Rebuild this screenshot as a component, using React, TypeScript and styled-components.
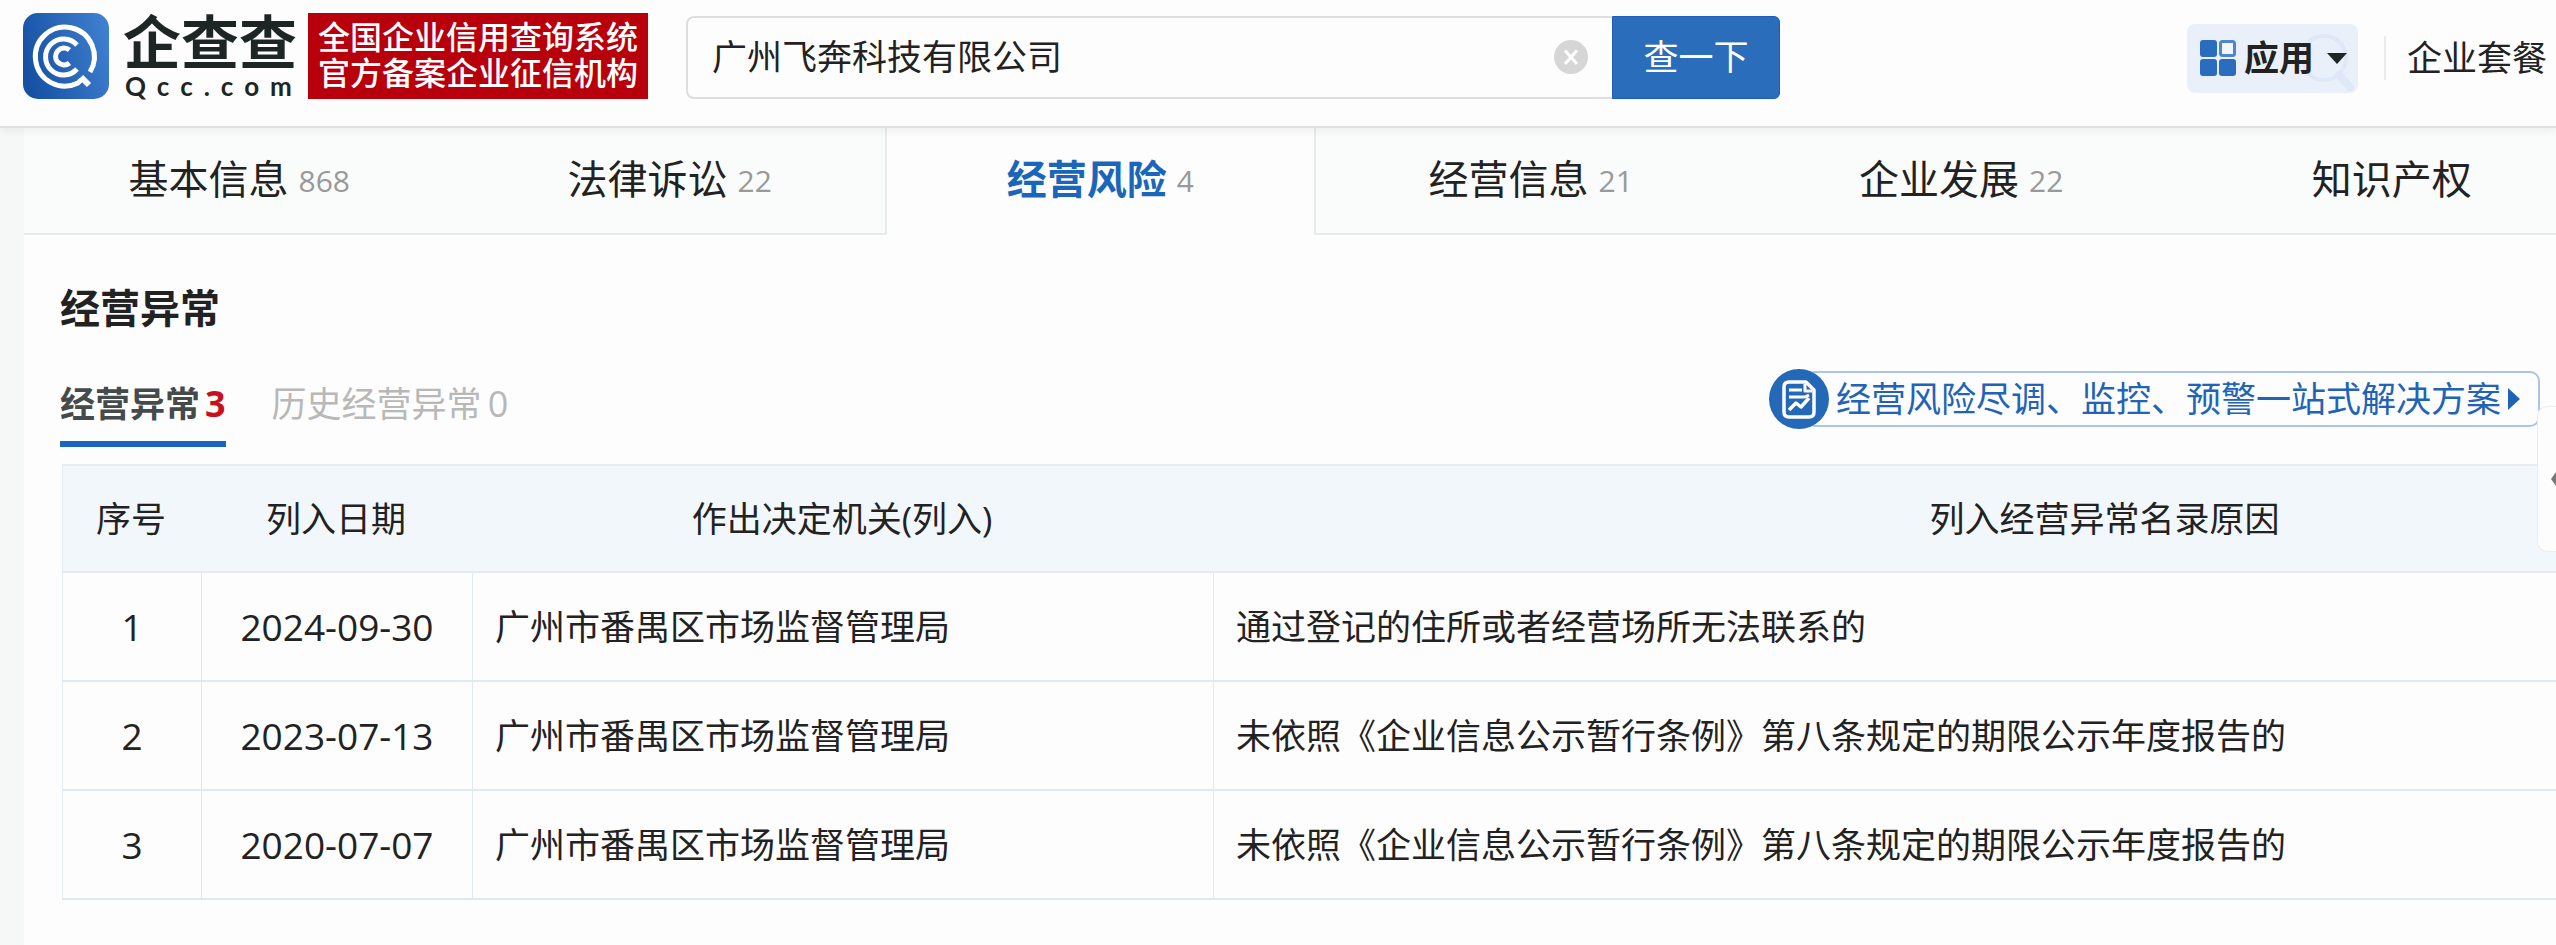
import React from "react";
import styled, { createGlobalStyle } from "styled-components";

const GlobalStyle = createGlobalStyle`
  *, *::before, *::after { box-sizing: border-box; }
  body {
    margin: 0;
    overflow-x: hidden;
    background: #fdfdfd;
    color: #222;
    font-family: "Open Sans", "Noto Sans CJK SC", sans-serif;
    font-size: 35px;
    line-height: 48px;
  }
  button, input { font: inherit; color: inherit; }
  a { color: inherit; text-decoration: none; }
`;

const Page = styled.div`
  position: relative;
  min-height: 100vh;
  display: flex;
  flex-direction: column;
  overflow: hidden;
`;

const Header = styled.header`
  position: relative;
  z-index: 1;
  display: flex;
  align-items: center;
  padding: 13px 9px 27px 23px;
  background: #fdfdfd;
  border-bottom: 2px solid #dfe0e0;
  box-shadow: 0 3px 8px rgba(0, 0, 0, 0.06);
`;

const Brand = styled.a`
  display: flex;
  align-items: center;
  gap: 14px;
`;

const Wordmark = styled.span`
  display: flex;
  flex-direction: column;
  width: 174px;
  color: #1d2624;
`;

const BrandName = styled.span`
  font-family: "Liberation Sans", "Noto Sans CJK SC", sans-serif;
  font-size: 58px;
  line-height: 60px;
  font-weight: 700;
`;

const BrandDomain = styled.span`
  padding-left: 2px;
  font-family: Lato, sans-serif;
  font-size: 26px;
  line-height: 24px;
  font-weight: 700;
  letter-spacing: 11px;
  white-space: nowrap;
`;

const Slogan = styled.p`
  margin: 0 0 0 11px;
  padding: 7px 10px;
  background: #b8000c;
  color: #fff;
  font-family: "Liberation Sans", "Noto Sans CJK SC", sans-serif;
  font-size: 32px;
  line-height: 36px;
  font-weight: 500;
  white-space: nowrap;
`;

const SearchForm = styled.form`
  flex: 0 1 1094px;
  display: flex;
  height: 83px;
  margin: 2px 0 0 38px;
`;

const SearchField = styled.div`
  flex: 1;
  min-width: 0;
  display: flex;
  align-items: center;
  padding: 0 24px;
  border: 2px solid #dedede;
  border-right: 0;
  border-radius: 8px 0 0 8px;
`;

const SearchInput = styled.input`
  flex: 1;
  min-width: 0;
  height: 48px;
  padding: 0;
  border: 0;
  outline: 0;
  background: transparent;
`;

const ClearButton = styled.button`
  display: flex;
  padding: 0;
  border: 0;
  background: none;
`;

const SearchButton = styled.button`
  width: 168px;
  padding: 0;
  border: 1px solid #1a5fb4;
  border-radius: 0 6px 6px 0;
  background: #2a6dbb;
  color: #fff;
`;

const HeaderNav = styled.nav`
  display: flex;
  align-items: center;
  margin-left: auto;
  padding-top: 4px;
`;

const AppsButton = styled.button`
  position: relative;
  display: flex;
  align-items: center;
  height: 69px;
  padding: 0 11px 0 13px;
  border: 0;
  border-radius: 8px;
  background: #eaf0fa;
  font-weight: 700;
`;

const AppsLabel = styled.span`
  position: relative;
  margin: 0 13px 0 8px;
`;

const Lens = styled.svg`
  position: absolute;
  right: 0;
  bottom: 0;
`;

const Caret = styled.svg`
  position: relative;
`;

const Divider = styled.span`
  width: 2px;
  height: 44px;
  margin: 0 21px 0 26px;
  background: #ebebeb;
`;

const Main = styled.main`
  flex: 1;
  display: flex;
  flex-direction: column;
  border-left: 24px solid #f6f8f8;
`;

const TabBar = styled.nav`
  display: grid;
  grid-template-columns: repeat(6, 1fr);
  margin-right: -51px;
`;

const Tab = styled.a<{ $active?: boolean }>`
  display: flex;
  align-items: center;
  justify-content: center;
  gap: 10px;
  height: 107px;
  padding-bottom: ${(p) => (p.$active ? 6 : 4)}px;
  border: solid #e9ebeb;
  border-width: ${(p) => (p.$active ? "0 2px" : "0 0 2px")};
  background: ${(p) => (p.$active ? "#fdfdfd" : "#fafbfb")};
  color: ${(p) => (p.$active ? "#1a66bb" : "#222")};
  font-size: 40px;
  font-weight: ${(p) => (p.$active ? 700 : 400)};
`;

const TabCount = styled.span`
  padding-top: 5px;
  color: #999;
  font-size: 30px;
  font-weight: 400;
`;

const Section = styled.section`
  padding: 49px 0 0 36px;
`;

const Title = styled.h1`
  margin: 0;
  font-size: 40px;
  line-height: 48px;
`;

const SubBar = styled.div`
  display: flex;
  justify-content: space-between;
  align-items: flex-start;
  height: 110px;
  margin: 22px 16px 0 0;
`;

const SubTabs = styled.div`
  display: flex;
  gap: 46px;
  padding-top: 26px;
`;

const SubTab = styled.button<{ $active?: boolean }>`
  display: flex;
  align-items: center;
  gap: ${(p) => (p.$active ? 5 : 6)}px;
  height: 67px;
  padding: 0 0 14px;
  border: 0;
  border-bottom: 6px solid ${(p) => (p.$active ? "#1b66bd" : "transparent")};
  background: none;
  color: ${(p) => (p.$active ? "#454a4a" : "#b8b8b8")};
  font-weight: ${(p) => (p.$active ? 700 : 400)};
`;

const SubCount = styled.span<{ $active?: boolean }>`
  color: ${(p) => (p.$active ? "#c8101c" : "inherit")};
  font-size: 36px;
`;

const Promo = styled.a`
  display: flex;
  align-items: center;
  margin-top: 15px;
  height: 60px;
  color: #2263b8;
`;

const PromoIcon = styled.svg`
  position: relative;
  flex: none;
`;

const PromoBox = styled.span`
  display: flex;
  align-items: center;
  gap: 7px;
  height: 56px;
  margin-left: -24px;
  padding: 0 18px 0 29px;
  border: 2px solid #a9c4e6;
  border-radius: 10px;
  white-space: nowrap;
`;

const TableFrame = styled.div`
  margin: 0 -442px 0 2px;
`;

const Table = styled.table`
  width: 100%;
  table-layout: fixed;
  border-collapse: separate;
  border-spacing: 0;
  border-top: 2px solid #e6ecf2;
  border-left: 1px solid #e6ebf4;
`;

const Col = styled.col<{ $width?: number }>`
  width: ${(p) => (p.$width ? `${p.$width}px` : "auto")};
`;

const HeadCell = styled.th`
  height: 107px;
  padding: 0 3px 0 0;
  border-bottom: 2px solid #e4ebf5;
  background: #f2f7fb;
  font-weight: 400;
`;

const Cell = styled.td<{ $center?: boolean }>`
  height: 109px;
  padding: 0 22px;
  border: solid #e2e8f3;
  border-width: 0 1px 2px 0;
  text-align: ${(p) => (p.$center ? "center" : "left")};
  font-size: ${(p) => (p.$center ? 37 : 35)}px;
  white-space: nowrap;
`;

const SideHandle = styled.button`
  position: absolute;
  z-index: 1;
  top: 406px;
  right: 0;
  display: flex;
  align-items: center;
  justify-content: flex-end;
  width: 19px;
  height: 146px;
  padding: 0;
  border: 1px solid #ececef;
  border-right: 0;
  border-radius: 10px 0 0 10px;
  background: #fdfdfd;
`;

const tabs = [
  { label: "基本信息", count: 868 },
  { label: "法律诉讼", count: 22 },
  { label: "经营风险", count: 4, active: true },
  { label: "经营信息", count: 21 },
  { label: "企业发展", count: 22 },
  { label: "知识产权" },
];

const rows = [
  { date: "2024-09-30", office: "广州市番禺区市场监督管理局", reason: "通过登记的住所或者经营场所无法联系的" },
  { date: "2023-07-13", office: "广州市番禺区市场监督管理局", reason: "未依照《企业信息公示暂行条例》第八条规定的期限公示年度报告的" },
  { date: "2020-07-07", office: "广州市番禺区市场监督管理局", reason: "未依照《企业信息公示暂行条例》第八条规定的期限公示年度报告的" },
];

function LogoMark() {
  return (
    <svg width="86" height="86" viewBox="0 0 86 86" aria-hidden="true">
      <defs>
        <linearGradient id="logo-bg" x1="0" y1="0.6" x2="1" y2="0.3">
          <stop offset="0" stopColor="#1550a3" />
          <stop offset="1" stopColor="#3f7fcf" />
        </linearGradient>
      </defs>
      <rect width="86" height="86" rx="15" fill="url(#logo-bg)" />
      <g fill="none" stroke="#fff" strokeWidth="5">
        <path d="M67 59A29.500 29.500 0 1 0 55 70L58 67" />
        <path d="M58 64L66 72" strokeWidth="6" />
        <path d="M54 32A18 18 0 1 0 54 56" />
        <path d="M46.500 37A8.500 8.500 0 1 0 46.500 50" />
      </g>
    </svg>
  );
}

export default function App() {
  return (
    <Page>
      <GlobalStyle />
      <Header>
        <Brand href="#">
          <LogoMark />
          <Wordmark>
            <BrandName>企查查</BrandName>
            <BrandDomain>Qcc.com</BrandDomain>
          </Wordmark>
        </Brand>
        <Slogan>
          全国企业信用查询系统
          <br />
          官方备案企业征信机构
        </Slogan>
        <SearchForm onSubmit={(e) => e.preventDefault()}>
          <SearchField>
            <SearchInput aria-label="企业名称" defaultValue="广州飞奔科技有限公司" />
            <ClearButton type="reset" aria-label="清除">
              <svg width="34" height="34" viewBox="0 0 34 34">
                <circle cx="17" cy="17" r="17" fill="#d6d6d6" />
                <path d="M11 10.500L23 24M23 10.500L11 24" stroke="#fff" strokeWidth="3" />
              </svg>
            </ClearButton>
          </SearchField>
          <SearchButton type="submit">查一下</SearchButton>
        </SearchForm>
        <HeaderNav>
          <AppsButton type="button">
            <Lens width="56" height="62" viewBox="0 0 56 62" aria-hidden="true">
              <circle cx="22" cy="27" r="22" fill="none" stroke="#dfe8f6" strokeWidth="4" />
              <path d="M37 44L48 56" stroke="#dfe8f6" strokeWidth="8" strokeLinecap="round" />
            </Lens>
            <svg width="36" height="36" viewBox="0 0 36 36" aria-hidden="true">
              <rect width="17" height="17" rx="3" fill="#2a6dbf" />
              <rect y="19" width="17" height="17" rx="3" fill="#2a6dbf" />
              <rect x="19" y="19" width="17" height="17" rx="3" fill="#2a6dbf" />
              <rect x="20.500" y="1.500" width="14" height="14" rx="2" fill="#f1f6fd" stroke="#4c86d0" strokeWidth="3" />
            </svg>
            <AppsLabel>应用</AppsLabel>
            <Caret width="20" height="11" viewBox="0 0 20 11" aria-hidden="true">
              <path d="M0 0H20L10 11Z" fill="#1f2626" />
            </Caret>
          </AppsButton>
          <Divider />
          <a href="#">企业套餐</a>
        </HeaderNav>
      </Header>
      <Main>
        <TabBar>
          {tabs.map((t) => (
            <Tab key={t.label} href="#" $active={t.active}>
              {t.label}
              {t.count !== undefined && <TabCount>{t.count}</TabCount>}
            </Tab>
          ))}
        </TabBar>
        <Section>
          <Title>经营异常</Title>
          <SubBar>
            <SubTabs>
              <SubTab type="button" $active>
                经营异常<SubCount $active>3</SubCount>
              </SubTab>
              <SubTab type="button">
                历史经营异常<SubCount>0</SubCount>
              </SubTab>
            </SubTabs>
            <Promo href="#">
              <PromoIcon width="60" height="60" viewBox="0 0 60 60" aria-hidden="true">
                <circle cx="30" cy="30" r="30" fill="#2468b8" />
                <g fill="none" stroke="#fff" strokeWidth="3.500" strokeLinejoin="round">
                  <path d="M20 13H37L45 21V43Q45 48 40 48H20Q15 48 15 43V18Q15 13 20 13Z" />
                  <path d="M20 21H33M20 28H36L40 26M36 15V22H43" strokeWidth="3" />
                  <path d="M20 41L27 34L32 38L40 29" />
                </g>
              </PromoIcon>
              <PromoBox>
                经营风险尽调、监控、预警一站式解决方案
                <svg width="12" height="22" viewBox="0 0 12 22" aria-hidden="true">
                  <path d="M0 0L12 11L0 22Z" fill="#1f63b8" />
                </svg>
              </PromoBox>
            </Promo>
          </SubBar>
          <TableFrame>
            <Table>
              <colgroup>
                <Col $width={139} />
                <Col $width={271} />
                <Col $width={741} />
                <Col />
              </colgroup>
              <thead>
                <tr>
                  <HeadCell>序号</HeadCell>
                  <HeadCell>列入日期</HeadCell>
                  <HeadCell>作出决定机关(列入)</HeadCell>
                  <HeadCell>列入经营异常名录原因</HeadCell>
                </tr>
              </thead>
              <tbody>
                {rows.map((r, i) => (
                  <tr key={r.date}>
                    <Cell $center>{i + 1}</Cell>
                    <Cell $center>{r.date}</Cell>
                    <Cell>{r.office}</Cell>
                    <Cell>{r.reason}</Cell>
                  </tr>
                ))}
              </tbody>
            </Table>
          </TableFrame>
        </Section>
      </Main>
      <SideHandle type="button" aria-label="展开">
        <svg width="5" height="14" viewBox="0 0 5 14">
          <path d="M5 0L0 7L5 14Z" fill="#777" />
        </svg>
      </SideHandle>
    </Page>
  );
}
